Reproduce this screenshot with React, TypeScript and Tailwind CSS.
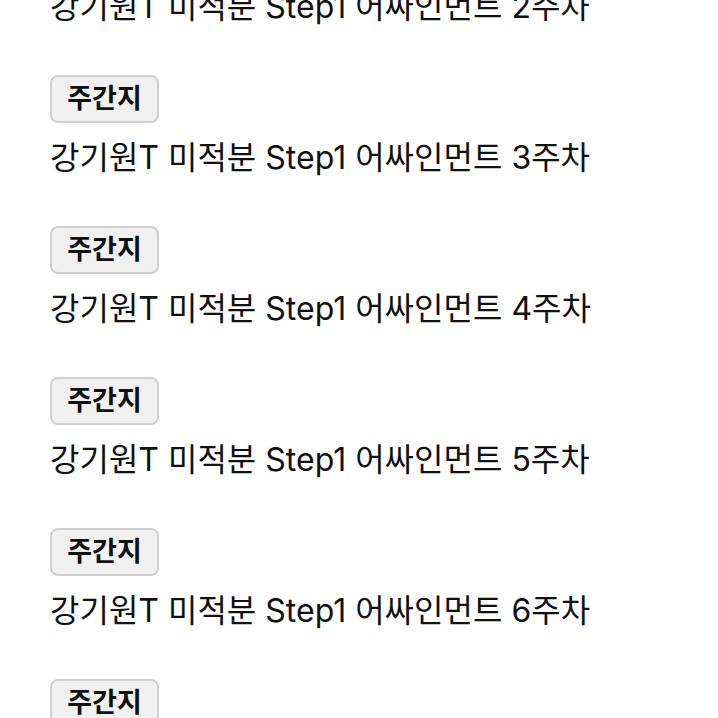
const WEEKS = [3, 4, 5, 6];

function Title({ week }: { week: number }) {
  return (
    <p className="h-[40px] whitespace-nowrap text-[32px] leading-[40px] text-[#111]">
      강기원T 미적분 Step1 어싸인먼트 {week}주차
    </p>
  );
}

function WeeklyButton() {
  return (
    <button className="flex h-[48px] w-[109px] items-center justify-center rounded-[8px] border-2 border-[#cfcfcf] bg-[#f0f0f0] text-[27px] font-bold text-[#111]">
      주간지
    </button>
  );
}

export default function App() {
  return (
    <div
      className="h-[718px] w-[718px] overflow-hidden bg-white pl-[50px]"
      style={{ fontFamily: 'Inter, "Noto Sans CJK KR", sans-serif' }}
    >
      <div className="-mt-[13px] flex flex-col items-start">
        <Title week={2} />
        {WEEKS.map((w) => (
          <div key={w} className="mt-[48px] flex flex-col items-start">
            <WeeklyButton />
            <div className="mt-[15px]">
              <Title week={w} />
            </div>
          </div>
        ))}
        <div className="mt-[48px]">
          <WeeklyButton />
        </div>
      </div>
    </div>
  );
}
